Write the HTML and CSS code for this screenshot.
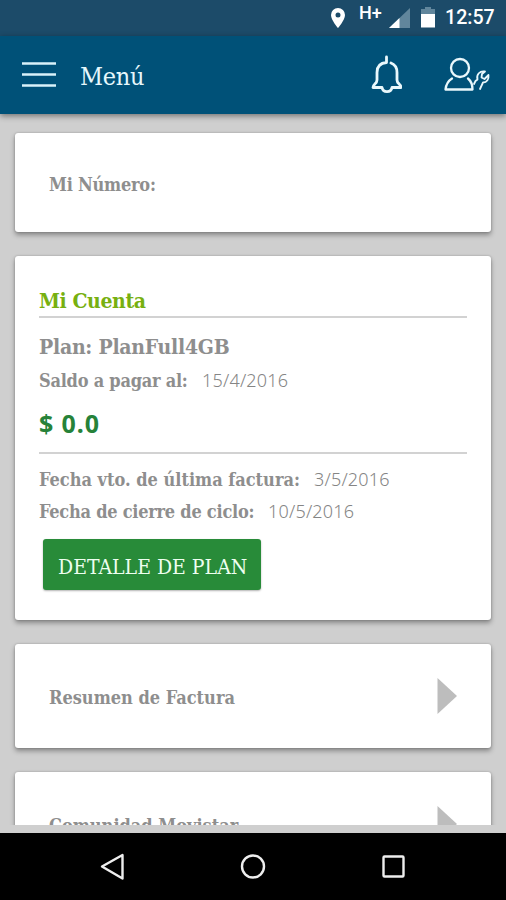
FILE: index.html
```html
<!DOCTYPE html>
<html lang="es">
<head>
<meta charset="utf-8">
<title>Menú</title>
<link rel="stylesheet" href="styles.css">
</head>
<body>
<div class="status">
  <svg class="status-icons" width="110" height="36" viewBox="0 0 110 36">
    <path fill="#fff" fill-rule="evenodd" d="M8 8a7 7 0 0 0-7 7c0 5 7 13 7 13s7-8 7-13a7 7 0 0 0-7-7zm0 4.500a2.500 2.500 0 1 1 0 5 2.500 2.500 0 0 1 0-5z"/>
    <text class="network" x="29" y="19">H+</text>
    <path fill="#61869c" d="M80 8v20H59z"/>
    <path fill="#fff" d="M69.500 18v10H59z"/>
    <path fill="#61869c" d="M95 7h6v2h4v5H91V9h4z"/>
    <path fill="#fff" d="M91 14h14v13.500H91z"/>
  </svg>
  <span class="clock">12:57</span>
</div>
<header class="header">
  <svg width="34" height="26" viewBox="0 0 34 26" stroke="#d9f2fa" stroke-width="2.400"><path d="M0 1.500h34M0 12.500h34M0 23.500h34"/></svg>
  <h1 class="title">Menú</h1>
  <svg class="bell" width="32" height="40" viewBox="0 0 32 40" fill="none" stroke="#e9f8fc" stroke-width="2.800" stroke-linecap="round" stroke-linejoin="round">
    <path d="M16.500 2v5.500C10 8 7 12 7 17.500V25c0 4-4 4-4 7.500h9c1 5.500 9 5.500 10 0h9c0-3.500-4-3.500-4-7.500v-7.500c0-5-2-8-6-9.500"/>
  </svg>
  <svg class="user" width="46" height="36" viewBox="0 0 46 36" fill="none" stroke="#e9f8fc" stroke-width="2.300" stroke-linecap="round" stroke-linejoin="round">
    <circle cx="16" cy="11" r="9"/>
    <path d="M8 21.500C4 24 2 28 1.500 32.500h27C28.500 28 27 24 24 21.500"/>
    <path stroke-width="1.800" d="M36 32l3-6.500c4 0 6-3.500 5.500-7.500l-4 4-3-1.500.5-3.500 3-2.500c-5-1-9 3-7.500 8l-2 1.500-1.500 3"/>
  </svg>
</header>
<main class="content">
  <section class="card number"><span class="label tight">Mi Número:</span></section>
  <section class="card account">
    <h2 class="heading">Mi Cuenta</h2>
    <p class="plan">Plan: PlanFull4GB</p>
    <p class="row balance"><span class="key label tight">Saldo a pagar al:</span><span class="date">15/4/2016</span></p>
    <p class="amount">$ 0.0</p>
    <p class="row due"><span class="key label">Fecha vto. de última factura:</span><span class="date">3/5/2016</span></p>
    <p class="row cycle"><span class="key label tight">Fecha de cierre de ciclo:</span><span class="date">10/5/2016</span></p>
    <button class="button">DETALLE DE PLAN</button>
  </section>
  <section class="card link"><span class="label">Resumen de Factura</span><svg width="20" height="36" viewBox="0 0 20 36"><path fill="#bdbdbd" d="M.5 0L20 18 .5 36z"/></svg></section>
  <section class="card link"><span class="label">Comunidad Movistar</span><svg width="20" height="36" viewBox="0 0 20 36"><path fill="#bdbdbd" d="M.5 0L20 18 .5 36z"/></svg></section>
</main>
<nav class="navbar">
  <svg width="24" height="28" viewBox="0 0 24 28" fill="none" stroke="#eee" stroke-width="2.400" stroke-linejoin="round"><path d="M22.500 2v23.500L2 13.500z"/></svg>
  <svg width="26" height="26" viewBox="0 0 26 26" fill="none" stroke="#eee" stroke-width="2.400"><circle cx="13" cy="12.500" r="11"/></svg>
  <svg width="24" height="24" viewBox="0 0 24 24" fill="none" stroke="#eee" stroke-width="2.400"><rect x="1.500" y="1.500" width="20" height="20" rx="1"/></svg>
</nav>
</body>
</html>
```

FILE: styles.css
```css
* { box-sizing: border-box; }
body {
  margin: 0;
  height: 900px;
  overflow: hidden;
  display: flex;
  flex-direction: column;
  background: #cfcfcf;
  font-family: "DejaVu Serif Condensed", "DejaVu Serif", serif;
}
h1, h2, p { margin: 0; font-weight: normal; }
.status {
  flex: none;
  height: 36px;
  padding-left: 330px;
  display: flex;
  align-items: center;
  background: #1c4b69;
}
.status-icons { flex: none; }
.network { font: 500 18px Roboto, sans-serif; fill: #fff; }
.clock {
  margin-left: 5px;
  color: #fff;
  font: 500 19.600px/36px Roboto, sans-serif;
}
.header {
  flex: none;
  position: relative;
  height: 78px;
  padding: 0 16px 0 22px;
  display: flex;
  align-items: center;
  background: #005178;
  box-shadow: 0 2px 6px rgba(0, 0, 0, .45);
}
.title {
  width: 90px;
  margin: 2px auto 0 24px;
  color: #e6f7fc;
  font-size: 25px;
  letter-spacing: -.3px;
}
.bell { margin-right: 42px; }
.content {
  flex: none;
  height: 711px;
  padding: 19px 15px 0;
  overflow: hidden;
  display: flex;
  flex-direction: column;
  gap: 24px;
}
.card {
  flex: none;
  background: #fff;
  border-radius: 3px;
  box-shadow: 0 3px 5px rgba(0, 0, 0, .35), 0 0 2px rgba(0, 0, 0, .25);
}
.label {
  color: #8e8e8e;
  font-size: 18px;
  font-weight: bold;
  white-space: nowrap;
}
.tight { letter-spacing: -.24px; }
.number {
  height: 99px;
  padding: 4px 34px 0;
  display: flex;
  align-items: center;
}
.account { height: 364px; padding: 0 24px; }
.heading {
  height: 62px;
  padding-top: 33px;
  border-bottom: 2px solid #d2d2d2;
  color: #77b010;
  font-size: 21px;
  line-height: 24px;
  font-weight: bold;
  letter-spacing: -.4px;
}
.plan {
  margin-top: 17px;
  color: #8e8e8e;
  font-size: 21px;
  line-height: 24px;
  font-weight: bold;
  letter-spacing: -.25px;
}
.row { display: flex; height: 24px; line-height: 24px; }
.key { flex: none; }
.date {
  color: #858585;
  font-family: "Noto Sans", "Open Sans", sans-serif;
  font-size: 18px;
  line-height: 22px;
  font-weight: 300;
  letter-spacing: .2px;
  white-space: nowrap;
}
.balance { margin-top: 10px; }
.balance .key { width: 163px; }
.amount {
  height: 61px;
  padding-top: 15px;
  border-bottom: 2px solid #d2d2d2;
  color: #268239;
  font: bold 25px/30px "Noto Sans", sans-serif;
  letter-spacing: .9px;
}
.due { margin-top: 14px; }
.due .key { width: 275px; }
.cycle { margin-top: 8px; }
.cycle .key { width: 229px; }
.button {
  display: block;
  width: 218px;
  height: 51px;
  margin: 15px 0 0 4px;
  padding: 5px 0 0 15px;
  border: 0;
  border-radius: 3px;
  background: #288b39;
  color: #eefff0;
  font-family: inherit;
  font-size: 21px;
  text-align: left;
  box-shadow: 0 1px 2px rgba(0, 0, 0, .3);
}
.link {
  height: 104px;
  padding: 0 34px;
  display: flex;
  align-items: center;
  justify-content: space-between;
}
.link .label { padding-top: 3px; }
.navbar {
  flex: none;
  height: 67px;
  margin-top: 8px;
  padding: 0 100px;
  display: flex;
  align-items: center;
  justify-content: space-between;
  background: #000;
}
```
